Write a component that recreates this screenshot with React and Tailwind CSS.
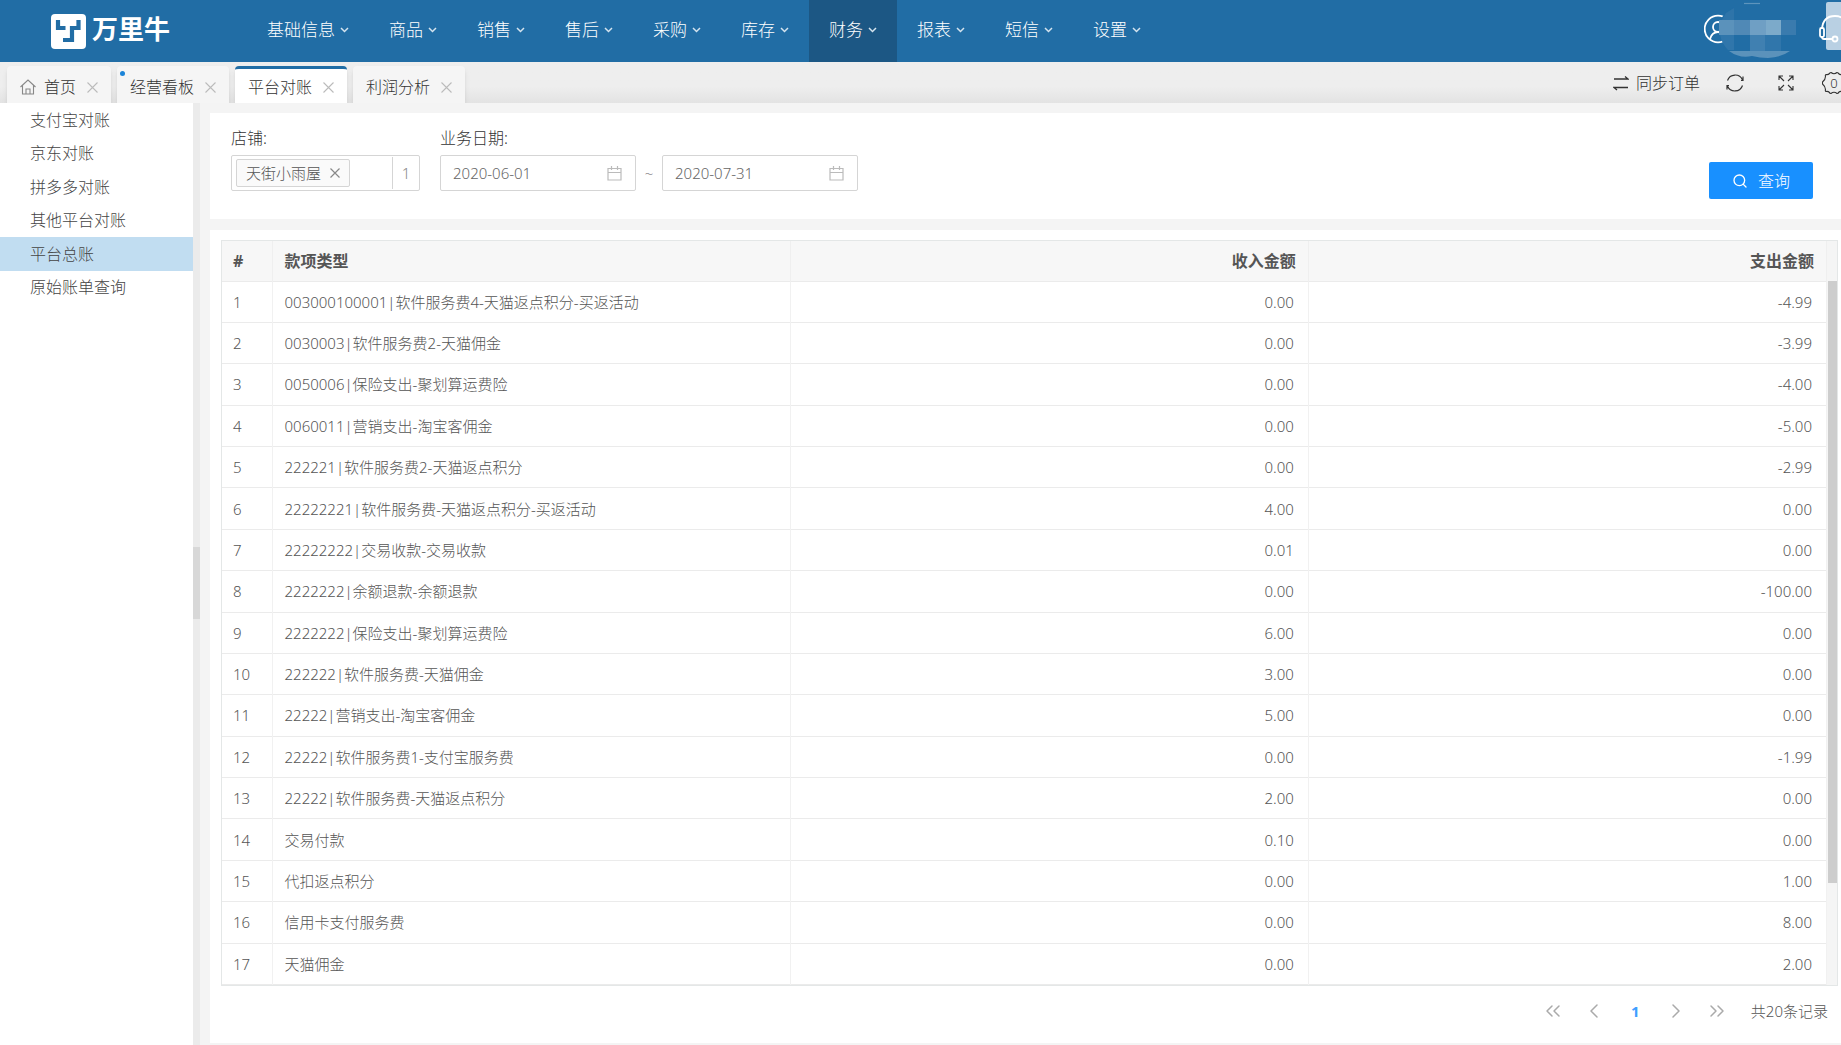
import { Search, ChevronLeft, ChevronRight, ChevronsLeft, ChevronsRight } from 'lucide-react';

const menus = ['基础信息', '商品', '销售', '售后', '采购', '库存', '财务', '报表', '短信', '设置'];

const tabs = [
  { label: '首页', home: true },
  { label: '经营看板', dot: true },
  { label: '平台对账', active: true },
  { label: '利润分析' },
];

const sideItems = ['支付宝对账', '京东对账', '拼多多对账', '其他平台对账', '平台总账', '原始账单查询'];

const rows = [
  ['003000100001|软件服务费4-天猫返点积分-买返活动', '0.00', '-4.99'],
  ['0030003|软件服务费2-天猫佣金', '0.00', '-3.99'],
  ['0050006|保险支出-聚划算运费险', '0.00', '-4.00'],
  ['0060011|营销支出-淘宝客佣金', '0.00', '-5.00'],
  ['222221|软件服务费2-天猫返点积分', '0.00', '-2.99'],
  ['22222221|软件服务费-天猫返点积分-买返活动', '4.00', '0.00'],
  ['22222222|交易收款-交易收款', '0.01', '0.00'],
  ['2222222|余额退款-余额退款', '0.00', '-100.00'],
  ['2222222|保险支出-聚划算运费险', '6.00', '0.00'],
  ['222222|软件服务费-天猫佣金', '3.00', '0.00'],
  ['22222|营销支出-淘宝客佣金', '5.00', '0.00'],
  ['22222|软件服务费1-支付宝服务费', '0.00', '-1.99'],
  ['22222|软件服务费-天猫返点积分', '2.00', '0.00'],
  ['交易付款', '0.10', '0.00'],
  ['代扣返点积分', '0.00', '1.00'],
  ['信用卡支付服务费', '0.00', '8.00'],
  ['天猫佣金', '0.00', '2.00'],
];

const Logo = () => (
  <a href="#" className="flex items-center gap-[6px] w-[196px] shrink-0 text-white">
    <svg className="w-[35px] h-[35px]" viewBox="0 0 35 35">
      <rect width="35" height="35" rx="4" fill="#fff" />
      <path d="M7 6v8h7.500M27.500 6v8H21v12h-9" fill="none" stroke="#216da5" strokeWidth="4.200" />
    </svg>
    <span className="text-[26px] leading-8 pb-1 font-bold">万里牛</span>
  </a>
);

const UserArea = () => (
  <svg className="w-[137px] h-[62px] shrink-0" viewBox="0 0 137 62">
    <g fill="none" stroke="#fff" strokeWidth="1.800">
      <circle cx="14" cy="29" r="13.300" />
      <circle cx="14" cy="27" r="5" />
      <path d="M6 39q2-7 8-7t8 7" />
    </g>
    <path d="M30 7Q14 16 15 29q1 15 16 25 8 4 17 2 11 4 20 0l18-5V7z" fill="#216da5" />
    <path d="M40 3.500h16" stroke="#5d94bd" strokeWidth="1.200" />
    <path d="M22 13l8-5v12H18z" fill="#2e74a9" />
    <path d="M15 20h15v15H15z" fill="#5b92bb" />
    <path d="M30 20h16v15H30z" fill="#5089b6" />
    <path d="M46 20h16v15H46z" fill="#6f9fc4" />
    <path d="M62 20h15v15H62z" fill="#7caaca" />
    <path d="M77 20h15v15H77z" fill="#3a7bae" />
    <path d="M16 35h14v15h-6q-6-6-8-15z" fill="#3076ab" />
    <path d="M46 35h15v16H46z" fill="#4080b1" />
    <path d="M61 35h16v16H61z" fill="#3076ab" />
    <path d="M25 51h61q-8 6-22 7-8 0-16-2-12 3-23-5z" fill="#5b92bb" />
    <rect x="122" y="2" width="22" height="48" rx="2" fill="#b9d0e3" />
    <g fill="none" stroke="#fff" strokeWidth="1.800">
      <path d="M118 29q1-13 13-13 8 0 11 6" />
      <rect x="116" y="28" width="4" height="9" rx="1.500" />
      <path d="M118 37q0 2 2 2h9" />
      <circle cx="131" cy="39" r="2.500" />
    </g>
  </svg>
);

const TopBar = () => (
  <header className="flex items-center h-[62px] pl-[51px] bg-[#216da5]">
    <Logo />
    <nav className="flex flex-1 h-full">
      {menus.map((label) => (
        <a
          key={label}
          href="#"
          className={`flex items-center gap-[5px] px-5 pb-[2px] text-[17px] leading-6 text-white ${label === '财务' ? 'bg-[#1c5784]' : ''}`}
        >
          {label}
          <svg className="w-[9px] h-[6px]" viewBox="0 0 9 6" fill="none" stroke="#d5e4ef" strokeWidth="1.500">
            <path d="M1 1l3.500 3.500L8 1" />
          </svg>
        </a>
      ))}
    </nav>
    <UserArea />
  </header>
);

const SyncIcon = () => (
  <svg className="w-4 h-4" viewBox="0 0 16 16" fill="none" stroke="#333" strokeWidth="1.300">
    <path d="M1 4h14l-3-2.500M15 12.500H1l3 2.500" />
  </svg>
);

const RefreshIcon = () => (
  <svg className="w-[18px] h-[18px]" viewBox="0 0 18 18" fill="none" stroke="#333" strokeWidth="1.200">
    <path d="M1.500 6.500A8 8 0 0 1 16.500 6M16.500 11.500A8 8 0 0 1 1.500 12M17 2.500V6.500h-2M1 15.500V11.500h2" />
  </svg>
);

const ExpandIcon = () => (
  <svg className="w-4 h-4" viewBox="0 0 16 16" fill="none" stroke="#333" strokeWidth="1.100">
    <path d="M1 5V1h4M1 1l5 5M11 1h4v4M15 1l-5 5M15 11v4h-4M15 15l-5-5M5 15H1v-4M1 15l5-5" />
  </svg>
);

const GearIcon = () => (
  <svg className="w-[24px] h-[24px]" viewBox="0 0 24 24" fill="none" stroke="#333" strokeWidth="1.100">
    <path d="M9 1.500q3 2.500 6 0 1.500 0 1.500 1 1.500 1.500 3.500 1 1 .5.5 2 0 3 2.500 5v3q-2.500 2-2.500 5 .5 1.500-.5 2-2-.5-3.500 1 0 1-1.500 1-3-2.500-6 0-1.500 0-1.500-1-1.500-1.500-3.500-1-1-.5-.5-2 0-3-3-5.500v-2q3-2.500 3-5.500-.5-1.500.5-2 2 .5 3.500-1 0-1 1.500-1z" />
  </svg>
);

const TabBar = () => (
  <div className="flex items-end h-[41px] pl-[7px] bg-linear-to-b from-[#eeeeee] from-60% to-[#e3e3e3] overflow-hidden">
    <div className="flex flex-1 items-end gap-[6px]">
      {tabs.map((tab) => (
        <div
          key={tab.label}
          className={`relative flex items-center h-[37px] pt-[2px] px-[13px] gap-[11px] rounded-t-sm shadow-md text-[16px] leading-6 text-[#333] border-t-3 ${tab.active ? 'bg-white border-[#216da5]' : 'bg-[#f5f5f5] border-[#f5f5f5]'}`}
        >
          {tab.dot && <span className="absolute left-[3px] top-[2px] w-[5px] h-[5px] rounded-full bg-[#1b84d8]" />}
          <a href="#" className="flex items-center gap-2">
            {tab.home && (
              <svg className="w-4 h-4" viewBox="0 0 16 16" fill="none" stroke="#888" strokeWidth="1.100">
                <path d="M.5 8L8 1l7.500 7M2.500 6.500V15h11V6.500M6 15v-5h4v5" />
              </svg>
            )}
            {tab.label}
          </a>
          <button type="button" aria-label="关闭" className="text-[#bbb]">
            <svg className="w-[11px] h-[11px]" viewBox="0 0 11 11" stroke="currentColor" strokeWidth="1.100">
              <path d="M.5.5l10 10M10.500.5l-10 10" />
            </svg>
          </button>
        </div>
      ))}
    </div>
    <div className="flex items-center h-full w-[228px] shrink-0 text-[16px] leading-6 text-[#333]">
      <button type="button" className="flex items-center gap-[7px] mr-[26px] shrink-0 whitespace-nowrap">
        <SyncIcon />
        同步订单
      </button>
      <button type="button" aria-label="刷新" className="mr-[34px] shrink-0">
        <RefreshIcon />
      </button>
      <button type="button" aria-label="全屏" className="mr-[28px] shrink-0">
        <ExpandIcon />
      </button>
      <button type="button" className="relative shrink-0">
        <GearIcon />
        <span className="absolute inset-0 text-[13px] text-center">0</span>
      </button>
    </div>
  </div>
);

const SideBar = () => (
  <aside className="flex w-[200px] shrink-0">
    <ul className="grid grid-rows-6 h-[201px] w-[193px] text-[16px] text-[#444]">
      {sideItems.map((item) => (
        <li key={item} className={item === '平台总账' ? 'bg-[#c1ddf1]' : ''}>
          <a href="#" className="flex items-center h-full pl-[30px]">{item}</a>
        </li>
      ))}
    </ul>
    <div className="flex items-center w-[7px] bg-[#ebebeb]">
      <div className="w-full h-[72px] mb-[-18px] bg-[#d8d8d8]" />
    </div>
  </aside>
);

const DateField = ({ id, value, label }) => (
  <div className="flex items-center w-[196px] h-9 pl-3 pr-[13px] border border-[#d5d5d5] rounded-xs">
    <input id={id} aria-label={label} defaultValue={value} className="flex-1 min-w-0 text-[15px] text-[#666] outline-none" />
    <svg className="w-[15px] h-[15px]" viewBox="0 0 15 15" fill="none" stroke="#bbb" strokeWidth="1.200">
      <path d="M1 2.500h13v11.500H1zM1 6.500h13M4.500 0v4M10.500 0v4" />
    </svg>
  </div>
);

const Filters = () => (
  <section className="flex items-start h-[106px] pl-[21px] pr-[28px] pt-3 bg-white">
    <div className="mr-5">
      <label htmlFor="shop" className="block mb-1 text-[16px] leading-[26px] text-[#333]">店铺:</label>
      <div className="flex items-center w-[189px] h-9 border border-[#d5d5d5] rounded-xs">
        <div className="flex items-center gap-[9px] h-[28px] ml-1 px-[9px] border border-[#d5d5d5] rounded-xs bg-[#fafafa] text-[15px] text-[#555] whitespace-nowrap">
          天街小雨屋
          <button type="button" aria-label="移除">
            <svg className="w-[10px] h-[10px]" viewBox="0 0 10 10" stroke="#888" strokeWidth="1.200">
              <path d="M.5.5l9 9M9.500.5l-9 9" />
            </svg>
          </button>
        </div>
        <input id="shop" className="flex-1 min-w-0 outline-none" />
        <span className="flex items-center justify-center w-[27px] h-8 border-l border-[#d5d5d5] text-[15px] text-[#888]">1</span>
      </div>
    </div>
    <div>
      <label htmlFor="from" className="block mb-1 text-[16px] leading-[26px] text-[#333]">业务日期:</label>
      <div className="flex items-center">
        <DateField id="from" value="2020-06-01" label="业务日期" />
        <span className="w-[26px] text-center text-[15px] text-[#777]">~</span>
        <DateField id="to" value="2020-07-31" label="结束日期" />
      </div>
    </div>
    <button
      type="button"
      className="flex items-center justify-center gap-[10px] w-[104px] h-[37px] mt-[37px] ml-auto rounded-xs bg-[#1890ff] text-[16px] text-white"
    >
      <Search className="w-4 h-4" strokeWidth={2} />
      查询
    </button>
  </section>
);

const Ledger = () => (
  <div className="flex border border-[#e4e7e7]">
    <table className="flex-1 w-full h-[744px] table-fixed border-collapse text-[15px] leading-6 text-[#555]">
      <colgroup>
        <col className="w-[50px]" />
        <col />
        <col />
        <col />
      </colgroup>
      <thead>
        <tr className="h-10 bg-[#f7f7f7] text-[16px] border-b border-[#ebebeb]">
          <th className="pl-[11px] text-left border-r border-[#efefef]">#</th>
          <th className="pl-3 text-left border-r border-[#efefef]">款项类型</th>
          <th className="pr-3 text-right border-r border-[#efefef]">收入金额</th>
          <th className="pr-3 text-right border-r border-[#efefef]">支出金额</th>
        </tr>
      </thead>
      <tbody>
        {rows.map(([name, income, cost], i) => (
          <tr key={i} className="border-b border-[#ebebeb]">
            <td className="pl-[11px] border-r border-[#f1f1f1]">{i + 1}</td>
            <td className="pl-3 border-r border-[#f1f1f1]">{name}</td>
            <td className="pr-[14px] text-right border-r border-[#f1f1f1]">{income}</td>
            <td className="pr-[14px] text-right border-r border-[#f1f1f1]">{cost}</td>
          </tr>
        ))}
      </tbody>
    </table>
    <div className="w-[10px] pt-10 bg-[#f5f5f5]">
      <div className="w-[9px] ml-px h-[602px] bg-[#cdcdcd]" />
    </div>
  </div>
);

const Pager = () => (
  <nav className="flex items-center justify-end h-[50px] pr-[10px] text-[#aaa]">
    <button type="button" aria-label="首页" className="flex justify-center w-[41px]">
      <ChevronsLeft className="w-6 h-6" strokeWidth={1.5} />
    </button>
    <button type="button" aria-label="上一页" className="flex justify-center w-[41px]">
      <ChevronLeft className="w-6 h-6" strokeWidth={1.5} />
    </button>
    <button type="button" className="w-[41px] text-[15px] font-bold text-[#409eff]">1</button>
    <button type="button" aria-label="下一页" className="flex justify-center w-[41px]">
      <ChevronRight className="w-6 h-6" strokeWidth={1.5} />
    </button>
    <button type="button" aria-label="末页" className="flex justify-center w-[41px]">
      <ChevronsRight className="w-6 h-6" strokeWidth={1.5} />
    </button>
    <span className="ml-[13px] text-[15px] text-[#555]">共20条记录</span>
  </nav>
);

export default function App() {
  return (
    <div className="flex flex-col min-h-screen bg-white font-light font-['Noto_Sans','Noto_Sans_CJK_SC',sans-serif]">
      <TopBar />
      <TabBar />
      <div className="flex flex-1">
        <SideBar />
        <main className="flex flex-col flex-1 min-w-0 gap-[11px] pl-[10px] pt-[10px] pb-[2px] bg-[#f4f4f4]">
          <Filters />
          <section className="flex-1 pl-[11px] pr-[3px] pt-[10px] bg-white">
            <Ledger />
            <Pager />
          </section>
        </main>
      </div>
    </div>
  );
}
